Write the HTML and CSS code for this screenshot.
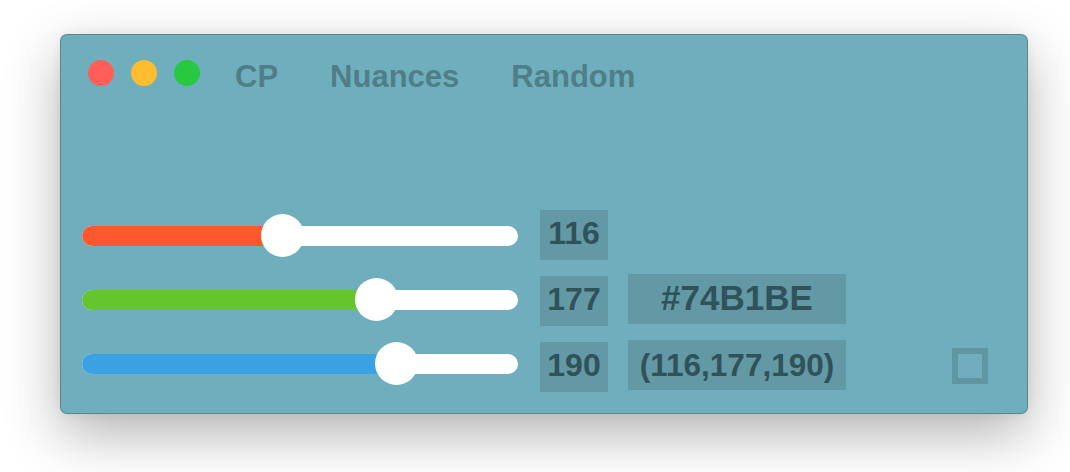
FILE: index.html
```html
<!DOCTYPE html>
<html lang="en">
<head>
<meta charset="utf-8">
<title>CP</title>
<link rel="stylesheet" href="styles.css">
</head>
<body>
<div class="window">
  <div class="titlebar">
    <div class="lights">
      <span class="light red"></span>
      <span class="light yellow"></span>
      <span class="light green"></span>
    </div>
    <nav class="tabs">
      <span class="tab">CP</span>
      <span class="tab">Nuances</span>
      <span class="tab">Random</span>
    </nav>
  </div>
  <div class="main">
    <div class="sliders">
      <div class="slider">
        <div class="track"></div>
        <div class="fill fill-red" style="width:199.3px"></div>
        <div class="thumb" style="left:178.8px"></div>
      </div>
      <div class="slider">
        <div class="track"></div>
        <div class="fill fill-green" style="width:294.3px"></div>
        <div class="thumb" style="left:272.8px"></div>
      </div>
      <div class="slider">
        <div class="track"></div>
        <div class="fill fill-blue" style="width:314.3px"></div>
        <div class="thumb" style="left:292.8px"></div>
      </div>
    </div>
    <div class="values">
      <div class="box num">116</div>
      <div class="box num">177</div>
      <div class="box num">190</div>
    </div>
    <div class="info">
      <div class="box hex">#74B1BE</div>
      <div class="box rgb">(116,177,190)</div>
    </div>
    <div class="check"></div>
  </div>
</div>
</body>
</html>
```
FILE: styles.css
```css
html, body {
  margin: 0;
  padding: 0;
  background: #ffffff;
}

body {
  min-height: 472px;
  overflow: hidden;
  font-family: "Liberation Sans", Arial, sans-serif;
  font-weight: bold;
}

.window {
  box-sizing: border-box;
  width: 968px;
  height: 380px;
  margin: 34px 0 0 60px;
  background: #6fafbd;
  border: 1px solid rgba(0, 0, 0, 0.22);
  border-radius: 7px;
  box-shadow: 0 20px 55px rgba(0, 0, 0, 0.3), 0 0 12px rgba(0, 0, 0, 0.06);
}

.titlebar {
  display: flex;
  align-items: flex-start;
  padding: 25px 0 0 27px;
}

.lights {
  display: flex;
  gap: 17px;
}

.light {
  width: 26px;
  height: 26px;
  border-radius: 50%;
}

.red { background: #ff5f57; }
.yellow { background: #febc2e; }
.green { background: #28c840; }

.tabs {
  display: flex;
  gap: 52px;
  margin-left: 35px;
}

.tab {
  font-size: 31px;
  line-height: 34px;
  color: #4f7e88;
}

.main {
  display: flex;
  align-items: flex-start;
  padding: 0 39px 0 21px;
  margin-top: 116px;
}

.sliders {
  display: flex;
  flex-direction: column;
  gap: 21px;
  margin-top: 4px;
}

.slider {
  position: relative;
  width: 436px;
  height: 43px;
}

.track,
.fill {
  position: absolute;
  left: 0;
  top: 12px;
  height: 20px;
  border-radius: 10px;
}

.track {
  width: 100%;
  background: #ffffff;
}

.fill-red { background: #ff572e; }
.fill-green { background: #66c42f; }
.fill-blue { background: #3aa2e3; }

.thumb {
  position: absolute;
  top: 0;
  width: 43px;
  height: 43px;
  border-radius: 50%;
  background: #ffffff;
}

.values {
  display: flex;
  flex-direction: column;
  gap: 16px;
  margin-left: 22px;
}

.info {
  display: flex;
  flex-direction: column;
  gap: 16px;
  margin-left: 20px;
  margin-top: 64px;
}

.box {
  height: 50px;
  background: #6299a5;
  color: #30525b;
  text-align: center;
}

.num {
  width: 68px;
  font-size: 32px;
  line-height: 46px;
}

.hex {
  width: 218px;
  font-size: 35px;
  line-height: 48px;
}

.rgb {
  width: 218px;
  font-size: 31.5px;
  line-height: 50px;
}

.check {
  box-sizing: border-box;
  width: 36px;
  height: 36px;
  margin-left: auto;
  margin-top: 138px;
  border: 6px solid #6096a2;
}
```
